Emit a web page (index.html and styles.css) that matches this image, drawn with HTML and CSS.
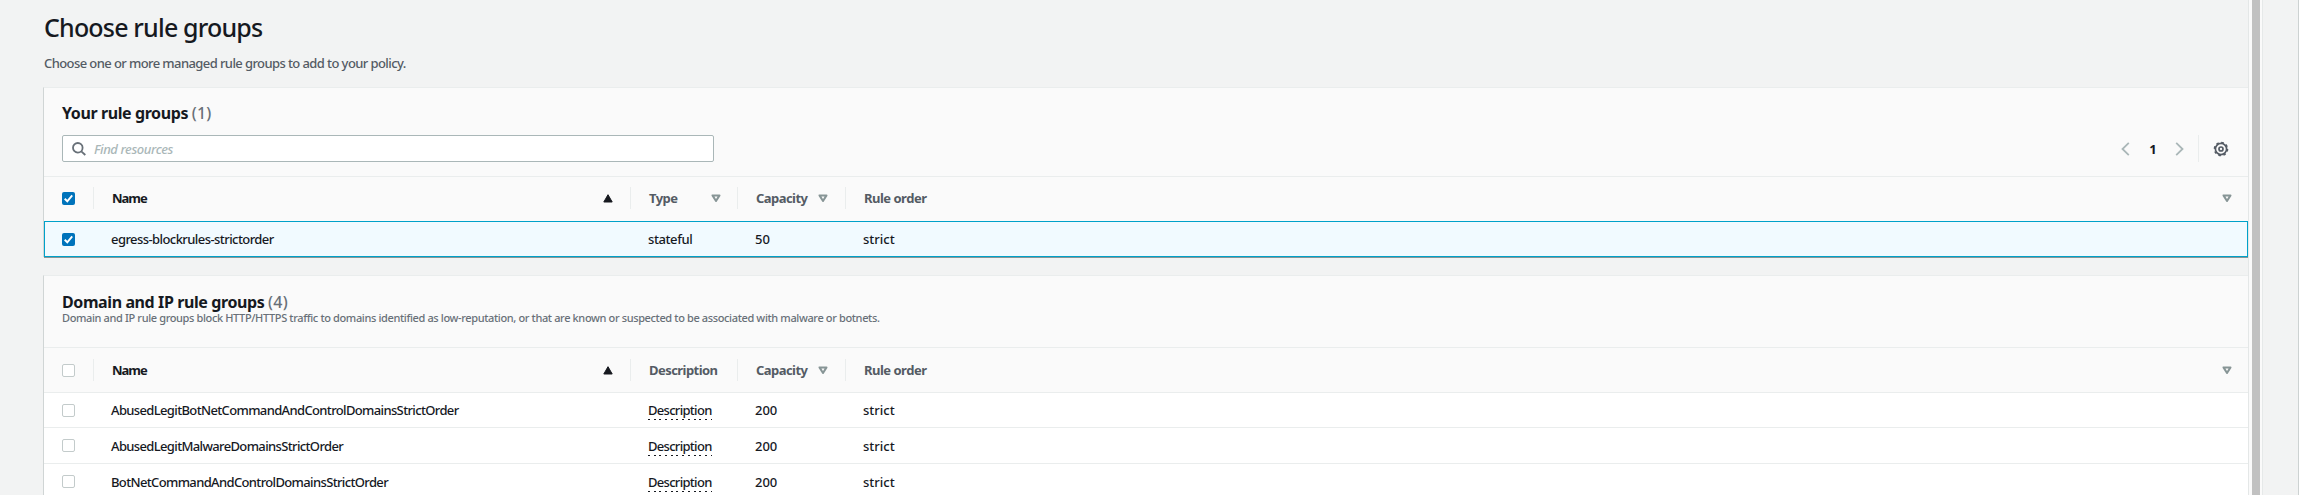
FILE: index.html
```html
<!DOCTYPE html>
<html lang="en">
<head>
<meta charset="utf-8">
<title>Choose rule groups</title>
<link rel="stylesheet" href="styles.css">
</head>
<body>
<svg class="defs" width="0" height="0" aria-hidden="true">
  <symbol id="asc" viewBox="0 0 10 9"><path d="M5 .7 9.2 8H.8z" fill="#16191f" stroke="#16191f" stroke-linejoin="round"/></symbol>
  <symbol id="sort" viewBox="0 0 10 9"><path d="M1.5 1.4h7L5 7z" fill="none" stroke="#879596" stroke-width="2" stroke-linejoin="round"/></symbol>
  <symbol id="tick" viewBox="0 0 13 13"><path d="M2.7 6.8 5.3 9.3 10.2 3.4" fill="none" stroke="#fff" stroke-width="1.9"/></symbol>
</svg>
<div class="page">
  <main class="content">
    <h1 class="title">Choose rule groups</h1>
    <p class="intro">Choose one or more managed rule groups to add to your policy.</p>

    <section class="card">
      <header class="card-head own">
        <h2 class="card-title">Your rule groups <span class="count">(1)</span></h2>
        <div class="toolbar">
          <div class="search">
            <svg class="search-icon" width="14" height="14" viewBox="0 0 14 14" fill="none" stroke="#687078" stroke-width="1.8"><circle cx="5.8" cy="5.8" r="4.8"/><path d="m9.3 9.3 4 3.7"/></svg>
            <span class="placeholder">Find resources</span>
          </div>
          <div class="pager">
            <svg width="9" height="14" viewBox="0 0 9 14" fill="none" stroke="#aab7b8" stroke-width="1.8"><path d="M7.8.8 1.5 7l6.3 6.2"/></svg>
            <span class="page-number">1</span>
            <svg width="9" height="14" viewBox="0 0 9 14" fill="none" stroke="#aab7b8" stroke-width="1.8"><path d="M1.2.8 7.5 7l-6.3 6.2"/></svg>
            <span class="settings"><svg width="16" height="16" viewBox="0 0 16 16" fill="none" stroke="#545b64"><circle cx="8" cy="8" r="5.6" stroke-width="1.7"/><circle cx="8" cy="8" r="6.6" stroke-width="1.4" stroke-dasharray="2.6 2.584"/><circle cx="8" cy="8" r="2" stroke-width="1.7"/></svg></span>
          </div>
        </div>
      </header>
      <div class="row head upper">
        <div class="cell check"><span class="box on"><svg><use href="#tick"/></svg></span></div>
        <div class="cell strong"><span class="name-label">Name</span><svg class="arrow"><use href="#asc"/></svg></div>
        <div class="cell type"><span>Type</span><svg class="arrow"><use href="#sort"/></svg></div>
        <div class="cell"><span>Capacity</span><svg class="arrow"><use href="#sort"/></svg></div>
        <div class="cell"><span>Rule order</span><svg class="arrow"><use href="#sort"/></svg></div>
      </div>
      <div class="row selected">
        <div class="cell check"><span class="box on"><svg><use href="#tick"/></svg></span></div>
        <div class="cell"><span class="name">egress-blockrules-strictorder</span></div>
        <div class="cell"><span class="kind">stateful</span></div>
        <div class="cell"><span>50</span></div>
        <div class="cell"><span>strict</span></div>
      </div>
    </section>

    <section class="card second">
      <header class="card-head domains">
        <h2 class="card-title">Domain and IP rule groups <span class="count">(4)</span></h2>
        <p class="card-note">Domain and IP rule groups block HTTP/HTTPS traffic to domains identified as low-reputation, or that are known or suspected to be associated with malware or botnets.</p>
      </header>
      <div class="row head">
        <div class="cell check"><span class="box"></span></div>
        <div class="cell strong"><span class="name-label">Name</span><svg class="arrow"><use href="#asc"/></svg></div>
        <div class="cell"><span>Description</span></div>
        <div class="cell"><span>Capacity</span><svg class="arrow"><use href="#sort"/></svg></div>
        <div class="cell"><span>Rule order</span><svg class="arrow"><use href="#sort"/></svg></div>
      </div>
      <div class="row first">
        <div class="cell check"><span class="box"></span></div>
        <div class="cell"><span class="name">AbusedLegitBotNetCommandAndControlDomainsStrictOrder</span></div>
        <div class="cell"><span class="popover">Description</span></div>
        <div class="cell"><span>200</span></div>
        <div class="cell"><span>strict</span></div>
      </div>
      <div class="row">
        <div class="cell check"><span class="box"></span></div>
        <div class="cell"><span class="name">AbusedLegitMalwareDomainsStrictOrder</span></div>
        <div class="cell"><span class="popover">Description</span></div>
        <div class="cell"><span>200</span></div>
        <div class="cell"><span>strict</span></div>
      </div>
      <div class="row">
        <div class="cell check"><span class="box"></span></div>
        <div class="cell"><span class="name">BotNetCommandAndControlDomainsStrictOrder</span></div>
        <div class="cell"><span class="popover">Description</span></div>
        <div class="cell"><span>200</span></div>
        <div class="cell"><span>strict</span></div>
      </div>
    </section>
  </main>
  <div class="scroll-track"><div class="scroll-thumb"></div></div>
  <aside class="gutter"></aside>
  <div class="edge"></div>
</div>
</body>
</html>
```
FILE: styles.css
```css
* { box-sizing: border-box; }
body { margin: 0; background: #fff; font-family: "Noto Sans", "Open Sans", sans-serif; font-size: 13px; font-weight: 500; color: #16191f; }
h1, h2, p { margin: 0; }
span { white-space: nowrap; }
svg { display: block; flex: none; }
.defs { position: absolute; }
.page { display: flex; width: 2309px; height: 495px; overflow: hidden; }
.content { width: 2248px; height: 495px; padding-left: 43px; background: #f2f3f3; overflow: hidden; flex: none; }
.scroll-track { width: 15px; flex: none; padding-left: 3px; background: #fafafa; border-left: 1px solid #e4e7e7; border-right: 1px solid #e6e9e9; }
.scroll-thumb { width: 8px; height: 495px; background: #c1c1c1; }
.gutter { width: 36px; flex: none; background: #f2f3f3; border-right: 1px solid #cdd2d2; }
.edge { flex: 1; background: #fff; }

.title { height: 53px; padding: 9px 0 0 1px; font-size: 25px; line-height: 36px; font-weight: 500; letter-spacing: -.82px; }
.intro { height: 34px; padding: 0 0 0 1px; line-height: 20px; color: #545b64; white-space: nowrap; letter-spacing: -.59px; }

.card { border-top: 1px solid #eaeded; border-left: 1px solid #d0d5d5; background: #fff; }
.second { margin-top: 18px; }
.card-head { background: #fafafa; padding-left: 18px; border-bottom: 1px solid #eaeded; }
.own { height: 89px; padding-top: 13px; }
.domains { height: 72px; padding-top: 14px; }
.card-title { font-size: 16px; line-height: 24px; font-weight: 700; height: 34px; letter-spacing: -.4px; }
.domains .card-title { height: 20px; }
.count { font-weight: 500; color: #687078; letter-spacing: .2px; }
.card-note { font-size: 11px; line-height: 16px; color: #687078; white-space: nowrap; letter-spacing: -.37px; }
.toolbar { display: flex; justify-content: space-between; }
.search { display: flex; align-items: center; width: 652px; height: 27px; padding-left: 9px; gap: 8px; background: #fff; border: 1px solid #aab7b8; border-radius: 2px; }
.placeholder { font-style: italic; color: #aab7b8; letter-spacing: -.4px; }
.pager { display: flex; align-items: center; padding-right: 19px; }
.page-number { width: 45px; padding-left: 1px; text-align: center; font-weight: 700; }
.settings { display: flex; align-items: center; height: 27px; margin-left: 14px; padding-left: 14px; border-left: 1px solid #eaeded; }

.row { display: grid; grid-template-columns: 50px 537px 107px 108px 1fr; height: 36px; border-bottom: 1px solid #eaeded; }
.first { height: 35px; }
.cell { display: flex; align-items: center; padding-left: 17px; }
.check { padding-left: 18px; }
.name { letter-spacing: -.64px; }
.selected .name { letter-spacing: -.57px; }
.kind { letter-spacing: -.4px; }
.head { height: 45px; background: #fafafa; color: #545b64; font-weight: 700; letter-spacing: -.55px; }
.head .cell { height: 22px; margin-top: 11px; padding-left: 18px; justify-content: space-between; border-right: 1px solid #eaeded; }
.upper .cell { margin-top: 10px; }
.head .cell:last-child { border-right: 0; padding-right: 16px; letter-spacing: -.5px; }
.head .strong { color: #16191f; }
.name-label { letter-spacing: -1px; }
.arrow { width: 10px; height: 9px; margin-right: 17px; }
.type .arrow { margin-right: 16px; }
.head .cell:last-child .arrow { margin-right: 0; }
.box { width: 13px; height: 13px; background: #fff; border: 1px solid #c3cbcb; border-radius: 2px; }
.box.on { background: #0073bb; border: 0; }
.box svg { width: 13px; height: 13px; }
.selected { height: 36px; margin-top: -1px; background: #f1faff; border: 1px solid #00a1c9; box-shadow: 0 1px 0 #879596; grid-template-columns: 49px 537px 107px 108px 1fr; }
.selected .check { padding-left: 17px; }
.popover { letter-spacing: -.7px; background: repeating-linear-gradient(90deg, #16191f 0 2px, transparent 2px 5.7px) left bottom / 100% 1px no-repeat; padding: 1px 0; }
```
